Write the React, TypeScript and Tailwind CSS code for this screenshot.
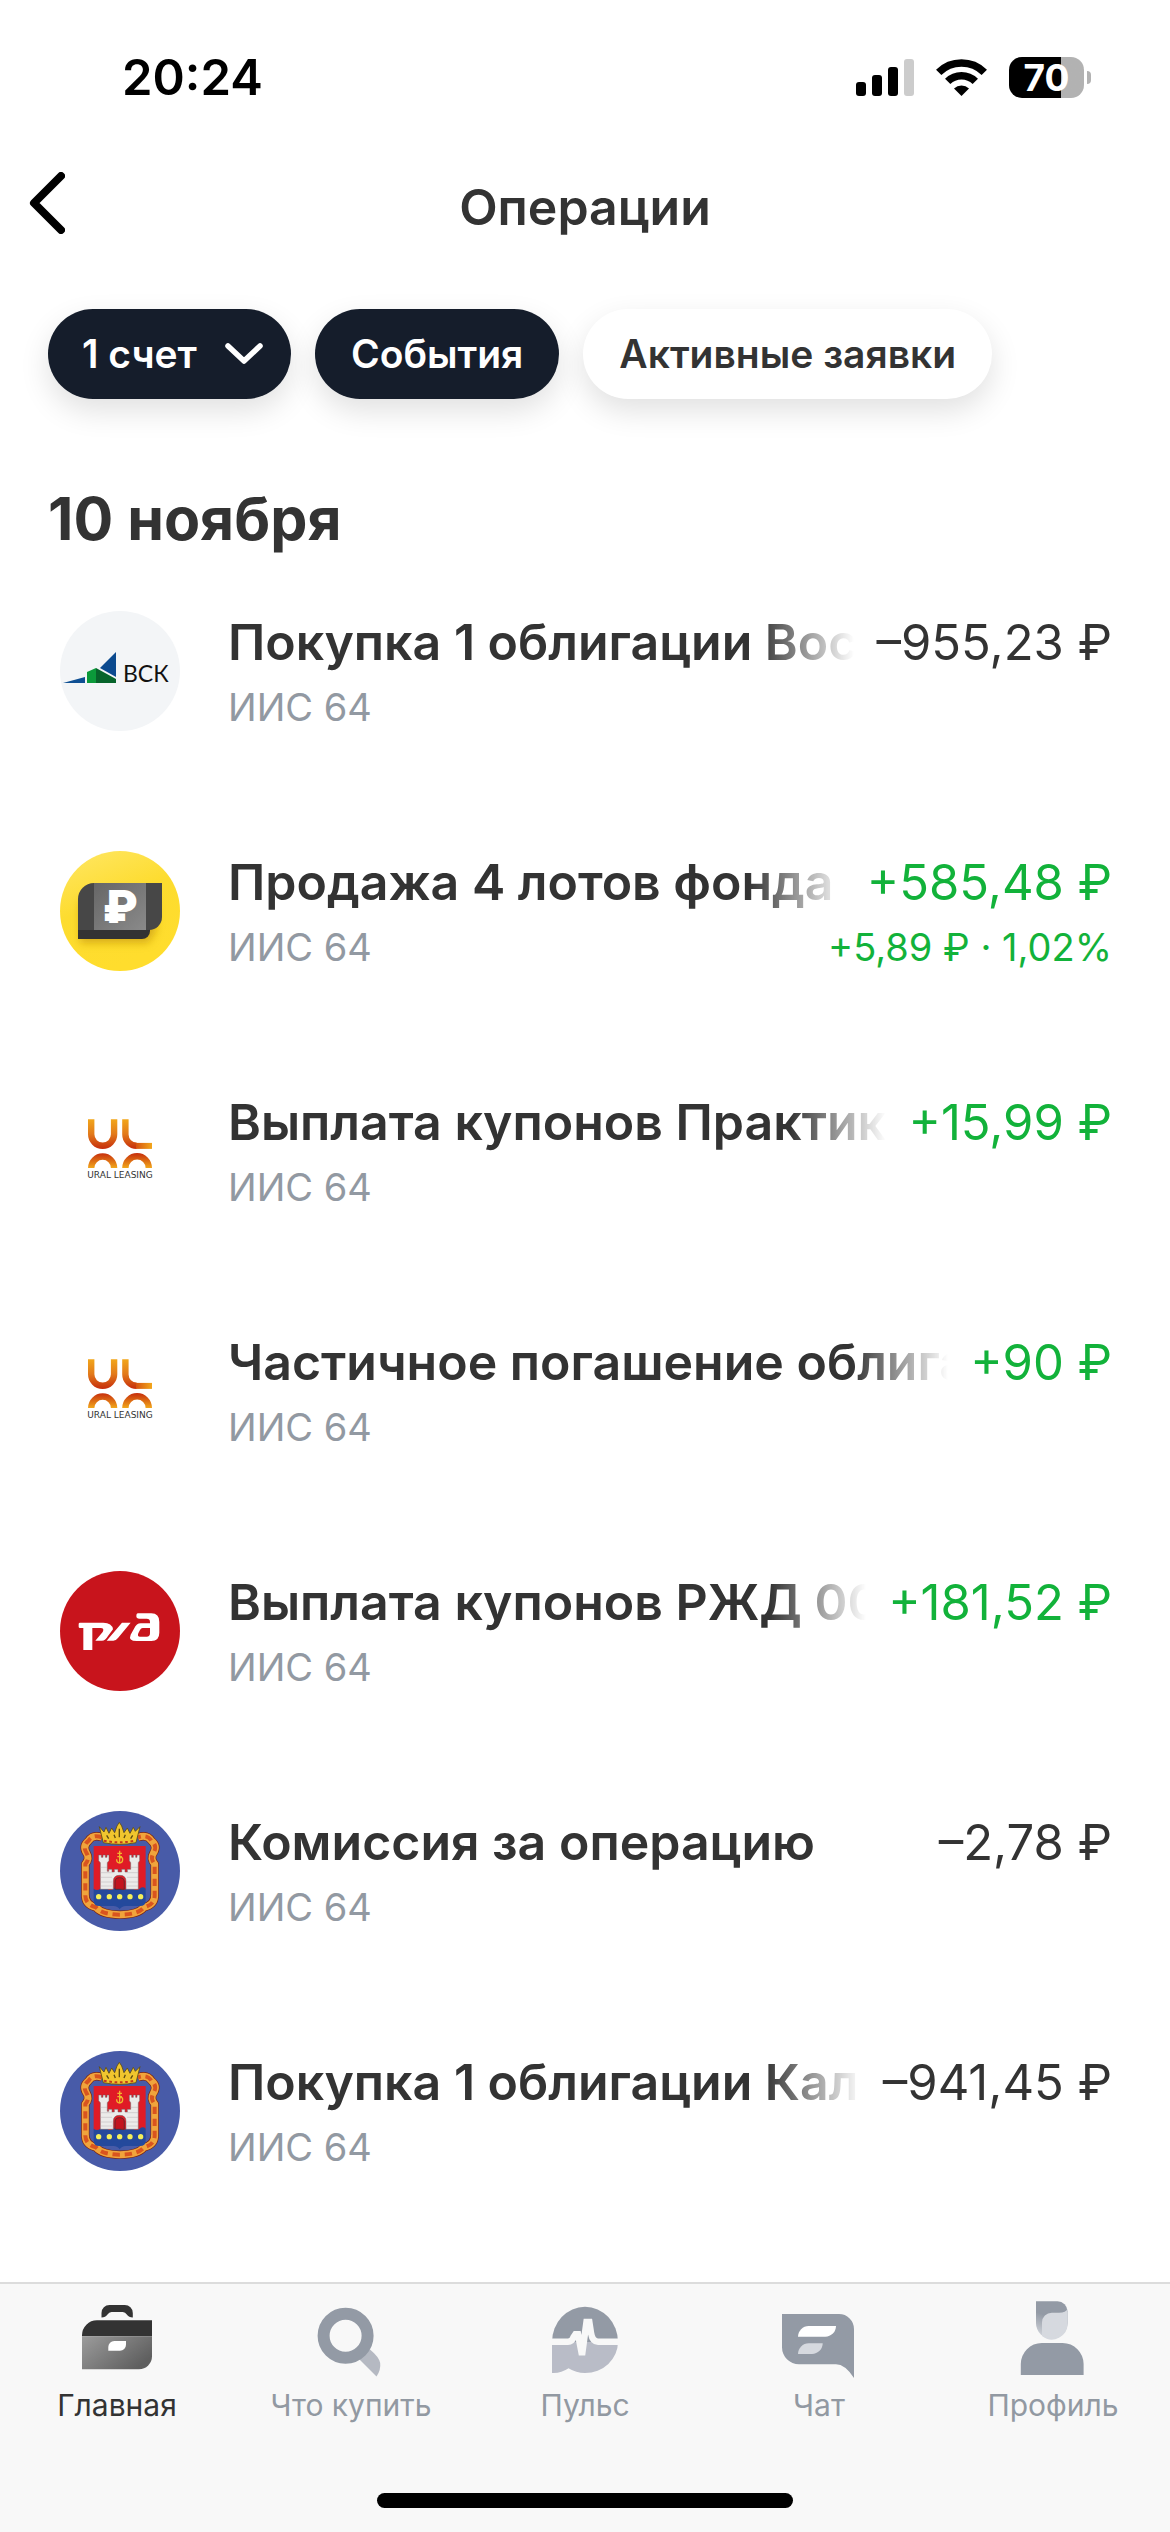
import type { ReactNode } from 'react'

type Operation = {
  id: number
  logo: ReactNode
  title: string
  account: string
  amount: string
  positive?: boolean
  profit?: string
}

function VskLogo() {
  return (
    <svg viewBox="0 0 120 120" className="size-[120px] shrink-0" aria-hidden="true">
      <circle cx="60" cy="60" r="60" fill="#f3f5f7" />
      <path d="M3 72 25 66v6z" fill="#0e4f93" />
      <path d="M56 41v25L40 57z" fill="#0b4a8f" />
      <path d="M27 72V61l9-4v15z" fill="#0b9a3a" />
      <path d="m36 57 20 11v4H36z" fill="#07642b" />
      <text x="63" y="71" fontSize="23" fontFamily="Lato, sans-serif" fill="#111">ВСК</text>
    </svg>
  )
}

function FundLogo() {
  return (
    <svg viewBox="0 0 120 120" className="size-[120px] shrink-0" aria-hidden="true">
      <defs>
        <linearGradient id="fund-bg" x1="0" y1="0" x2="0.4" y2="1">
          <stop offset="0" stopColor="#ffe766" />
          <stop offset="0.5" stopColor="#fddc2f" />
          <stop offset="1" stopColor="#ffdd2d" />
        </linearGradient>
        <linearGradient id="fund-note" x1="0" y1="0" x2="1" y2="1">
          <stop offset="0" stopColor="#666" />
          <stop offset="1" stopColor="#8a8a8a" />
        </linearGradient>
        <filter id="fund-shadow" x="-20%" y="-20%" width="140%" height="150%">
          <feGaussianBlur stdDeviation="4" />
        </filter>
      </defs>
      <circle cx="60" cy="60" r="60" fill="url(#fund-bg)" />
      <path d="M20 50h76v30l-8 12H20z" fill="#c79a10" opacity="0.7" filter="url(#fund-shadow)" />
      <path d="M18 76h72v4a8 8 0 0 1-8 8H18z" fill="#333" />
      <path d="M34 32h68v34a13 13 0 0 1-13 13H18V48a16 16 0 0 1 16-16z" fill="#474747" />
      <path d="M34 32h52v47H34z" fill="url(#fund-note)" />
      <text x="60" y="72" textAnchor="middle" fontSize="45" fontWeight="900" fontFamily="Inter, sans-serif" fill="#fff">₽</text>
    </svg>
  )
}

function UralLogo() {
  return (
    <svg viewBox="0 0 120 120" className="size-[120px] shrink-0" aria-hidden="true">
      <defs>
        <linearGradient id="ural-down" gradientUnits="userSpaceOnUse" x1="0" y1="28" x2="0" y2="58">
          <stop offset="0" stopColor="#f2a71b" />
          <stop offset="0.5" stopColor="#e27a1a" />
          <stop offset="1" stopColor="#c62d0c" />
        </linearGradient>
        <linearGradient id="ural-up" gradientUnits="userSpaceOnUse" x1="0" y1="62" x2="0" y2="77">
          <stop offset="0" stopColor="#c62d0c" />
          <stop offset="1" stopColor="#f2a71b" />
        </linearGradient>
        <linearGradient id="ural-side" gradientUnits="userSpaceOnUse" x1="72" y1="0" x2="92" y2="0">
          <stop offset="0" stopColor="#cf3f0e" />
          <stop offset="1" stopColor="#f2a71b" />
        </linearGradient>
      </defs>
      <g fill="none" strokeWidth="6.4">
        <path d="M31.2 28.3v15a11.4 11.4 0 0 0 22.9 0v-15" stroke="url(#ural-down)" />
        <path d="M65.4 28.3v15.2a11.2 11.2 0 0 0 11.2 11.2" stroke="url(#ural-down)" />
        <path d="M76 54.9h16" stroke="url(#ural-side)" strokeWidth="6" />
        <path d="M31.2 77a11.4 11.4 0 0 1 22.9 0" stroke="url(#ural-up)" />
        <path d="M65.4 77a11.7 11.7 0 0 1 23.4 0" stroke="url(#ural-up)" />
      </g>
      <text x="60" y="87" textAnchor="middle" fontSize="9" fontFamily="'DejaVu Sans', sans-serif" fill="#333">URAL LEASING</text>
    </svg>
  )
}

function RzdLogo() {
  return (
    <svg viewBox="0 0 120 120" className="size-[120px] shrink-0" aria-hidden="true">
      <circle cx="60" cy="60" r="60" fill="#c8141c" />
      <g transform="translate(-20 -31) scale(.3333)" fill="#fff">
        <path d="M120 248H190Q216 248 219 268L204 288Q196 302 186 302H166L188 276Q194 264 182 264H157V330H130V264H120Q116 264 116 260V252Q116 248 120 248Z" />
        <path d="M200 302 246 248H272L234 294Q228 302 220 302Z" />
        <path
          fillRule="evenodd"
          d="M293 220H334Q358 220 358 246V278Q358 303 334 303H290Q264 303 272 284L282 266Q290 250 302 250H330V246Q330 236 320 236H298Q289 236 289 228Q289 220 293 220ZM308 264Q303 264 300 270L295 280Q291 290 300 290H320Q330 290 330 280V264Z"
        />
      </g>
    </svg>
  )
}

const RIBBON =
  'M186 142Q158 132 146 152Q126 168 140 190Q150 206 136 222V312Q134 344 168 352Q186 374 240 374Q294 374 312 352Q346 344 344 312V222Q330 206 340 190Q354 168 334 152Q322 132 294 142'

function KaliningradLogo() {
  return (
    <svg viewBox="0 0 120 120" className="size-[120px] shrink-0" aria-hidden="true">
      <circle cx="60" cy="60" r="60" fill="#485ba8" />
      <g transform="translate(-20 -21) scale(.3333)">
        {/* Ribbon */}
        <g fill="none" strokeLinejoin="round">
          <path d={RIBBON} stroke="#7d2410" strokeWidth="25" />
          <path d={RIBBON} stroke="#f0a43c" strokeWidth="21" />
          <path d={RIBBON} stroke="#d9541f" strokeWidth="12" strokeDasharray="22 14" />
        </g>
        {/* Shield */}
        <path d="M161 168H317V300H161Z" fill="#e01b26" />
        <path d="M161 296Q171 304 181 296T201 296T221 296T240 296T259 296T279 296T299 296T317 296V334Q317 348 300 348H258Q244 349 239 358Q234 349 220 348H178Q161 348 161 334Z" fill="#24499c" />
        <g fill="#f4ef5a">
          <circle cx="176" cy="320" r="8" />
          <circle cx="208" cy="320" r="8" />
          <circle cx="239" cy="320" r="8" />
          <circle cx="270" cy="320" r="8" />
          <circle cx="302" cy="320" r="8" />
        </g>
        {/* Castle */}
        <path
          d="M176 195H184V202H189V195H196V202H201V195H207V212L202 218V244H206V238H216V246H223V238H234V246H245V238H255V246H262V238H272V218L268 212V195H275V202H280V195H287V202H291V195H299V212L295 218V298H258V274Q258 256 239 256Q220 256 220 274V298H181V218L176 212Z"
          fill="#ecebea"
          stroke="#6b5b60"
          strokeWidth="1.5"
        />
        <g stroke="#b9b3b6" strokeWidth="1.5">
          <path d="M182 232H201M182 248H218M182 262H216M182 276H216M182 288H216M272 232H294M260 248H294M261 262H294M261 276H294M261 288H294" />
        </g>
        <path d="M225 298V276Q225 263 239 263Q253 263 253 276V298Z" fill="#c3141f" stroke="#333" strokeWidth="2" />
        {/* Monogram */}
        <path d="M239 182V218M232 190H246M232 200H246M230 208Q230 219 239 219Q248 219 248 208Q248 200 239 204" fill="none" stroke="#f0b52c" strokeWidth="4" />
        {/* Crown */}
        <path
          d="M190 158 178 110 192 126 198 112 207 130 215 114 224 128 231 108 238 97 245 108 252 128 262 114 270 130 280 112 286 124 300 110 288 158Q239 168 190 158Z"
          fill="#f0c52e"
          stroke="#5d4a12"
          strokeWidth="2.5"
        />
        <path d="M200 136 206 146M222 134 226 144M256 134 252 144M278 136 272 146M238 116V142" stroke="#5d4a12" strokeWidth="4" />
        <path d="M192 152Q239 162 286 152" fill="none" stroke="#c23b17" strokeWidth="6" strokeDasharray="8 8" />
      </g>
    </svg>
  )
}

const OPERATIONS: Operation[] = [
  { id: 1, logo: <VskLogo />, title: 'Покупка 1 облигации Вос', account: 'ИИС 64', amount: '–955,23 ₽' },
  { id: 2, logo: <FundLogo />, title: 'Продажа 4 лотов фонда Д', account: 'ИИС 64', amount: '+585,48 ₽', positive: true, profit: '+5,89 ₽ · 1,02%' },
  { id: 3, logo: <UralLogo />, title: 'Выплата купонов Практик', account: 'ИИС 64', amount: '+15,99 ₽', positive: true },
  { id: 4, logo: <UralLogo />, title: 'Частичное погашение облига', account: 'ИИС 64', amount: '+90 ₽', positive: true },
  { id: 5, logo: <RzdLogo />, title: 'Выплата купонов РЖД 00', account: 'ИИС 64', amount: '+181,52 ₽', positive: true },
  { id: 6, logo: <KaliningradLogo />, title: 'Комиссия за операцию', account: 'ИИС 64', amount: '–2,78 ₽' },
  { id: 7, logo: <KaliningradLogo />, title: 'Покупка 1 облигации Кал', account: 'ИИС 64', amount: '–941,45 ₽' },
]

const TABS = [
  {
    label: 'Главная',
    active: true,
    icon: (
      <>
        <defs>
          <linearGradient id="bag" x1="0" y1="0" x2="1" y2="0.6">
            <stop offset="0" stopColor="#9c9c9c" />
            <stop offset="1" stopColor="#5f5f5f" />
          </linearGradient>
        </defs>
        <path d="M26.5 20.5V16a8 8 0 0 1 8-8h15.3a8 8 0 0 1 8 8v4.5q-4 0-6-3-1.5-2.5-4-2.5H36.5q-2.5 0-4 2.5-2 3-6 3z" fill="#333" />
        <path d="M7 39.3v-1a15 15 0 0 1 15-15h55v16z" fill="#333" />
        <path d="M7 39.3h70v20a13 13 0 0 1-13 13H7z" fill="url(#bag)" />
        <path d="M33.3 53.7V50a6 6 0 0 1 6-6H51v3.7a6 6 0 0 1-6 6z" fill="#fff" />
      </>
    ),
  },
  {
    label: 'Что купить',
    icon: (
      <>
        <path d="M50 62 67.5 79.5Q72 73 71.2 66 70 60 61 52.5z" fill="#b5b9c2" />
        <circle cx="36.6" cy="38.7" r="22" fill="none" stroke="#939aa5" strokeWidth="12" />
      </>
    ),
  },
  {
    label: 'Пульс',
    icon: (
      <>
        <path d="M9 45a33 35.3 0 0 1 66 0z" fill="#939aa5" />
        <path d="M9 45h66a33 31 0 0 1-33 31q-9 0-16.5-4.7Q18 76.5 9 76z" fill="#b9bcc7" />
        <path d="M8 44.7h17q4 0 5.5-4.5l2-3h2.5L39 58l4.5-33h2.8l1.7 11q1.5 8.7 7 8.7h21" fill="none" stroke="#f8f8f8" strokeWidth="6.5" />
      </>
    ),
  },
  {
    label: 'Чат',
    icon: (
      <>
        <path d="M5 17h57a15 15 0 0 1 15 15v49Q68 67.3 59 67.3H22a17 17 0 0 1-17-17z" fill="#939aa5" />
        <path d="M21 39.7a10.7 10.7 0 0 1 10.7-10.7H59a10.7 10.7 0 0 1-10.7 10.7z" fill="#fff" />
        <path d="M21 57a10.7 10.7 0 0 1 10.7-10.7h14A10.7 10.7 0 0 1 35 57z" fill="#d6d9df" />
      </>
    ),
  },
  {
    label: 'Профиль',
    icon: (
      <>
        <defs>
          <linearGradient id="hair" x1="0.5" y1="0" x2="0.2" y2="1">
            <stop offset="0" stopColor="#939aa5" />
            <stop offset="0.4" stopColor="#939aa5" />
            <stop offset="1" stopColor="#d6d9df" />
          </linearGradient>
        </defs>
        <path d="M25 4.3h21.5a10 10 0 0 1 10 10V26a15.7 15.7 0 0 1-31.5 0z" fill="url(#hair)" />
        <path d="M31 39V25.5a9.8 9.8 0 0 1 9.8-9.8H48q7 0 8.5-4V26A15.7 15.7 0 0 1 31 39z" fill="#d6d9df" />
        <path d="M9.8 78V67a21 21 0 0 1 21-21h20.8a21 21 0 0 1 21 21v11z" fill="#939aa5" />
      </>
    ),
  },
]

function StatusBar() {
  return (
    <div className="flex h-[141px] items-center justify-between pt-[14px] pr-[79px] pl-[122px]">
      <span className="text-[49px] leading-none font-semibold text-black">20:24</span>
      <div className="flex items-center gap-[22px]">
        <svg viewBox="0 0 58 37" className="h-[37px] w-[58px]" aria-hidden="true">
          <rect x="0" y="23" width="10" height="14" rx="3" />
          <rect x="16" y="16" width="10" height="21" rx="3" />
          <rect x="32" y="8" width="10" height="29" rx="3" />
          <rect x="48" y="0" width="10" height="37" rx="3" fill="#ccc" />
        </svg>
        <svg viewBox="0 0 51 37" className="h-[37px] w-[51px]" aria-hidden="true">
          <g fill="none" stroke="#000" strokeWidth="7.6">
            <path d="M2.7 13.4a32.5 32.5 0 0 1 45.6 0" />
            <path d="M11.7 22.4a19.7 19.7 0 0 1 27.6 0" />
          </g>
          <path d="M25.5 37 18 29.5a10.8 10.8 0 0 1 15 0z" />
        </svg>
        <div className="flex items-center gap-[3px]">
          <span className="flex h-[41px] w-[75px] items-center justify-center rounded-[13px] bg-linear-to-r from-black from-70% to-[#b2b2b2] to-70% text-[37px] leading-none font-bold text-white">
            70
          </span>
          <span className="h-[13px] w-1 rounded-r-full bg-[#b2b2b2]" />
        </div>
      </div>
    </div>
  )
}

function OperationRow({ op }: { op: Operation }) {
  return (
    <li className="flex h-[240px] items-start gap-12 py-[60px] pr-[58px] pl-[60px]">
      {op.logo}
      <div className="flex min-w-0 flex-1 flex-col gap-[10px]">
        <div className="flex h-[62px] items-baseline gap-[22px] leading-[62px]">
          <span className="min-w-0 flex-1 overflow-hidden text-[50px] font-semibold whitespace-nowrap mask-r-from-[calc(100%-96px)] mask-r-to-100%">
            {op.title}
          </span>
          <span className={`shrink-0 text-[49px] ${op.positive ? 'text-[#12b23a]' : 'text-[#333]'}`}>{op.amount}</span>
        </div>
        <div className="flex justify-between text-[38px] leading-[48px]">
          <span className="text-[#9299a2]">{op.account}</span>
          {op.profit && <span className="text-[#12b23a]">{op.profit}</span>}
        </div>
      </div>
    </li>
  )
}

export default function App() {
  return (
    <div className="flex min-h-screen flex-col bg-white font-[Inter,sans-serif] text-[#333]">
      <StatusBar />

      <header className="grid h-[132px] grid-cols-[120px_1fr_120px] items-center">
        <button type="button" aria-label="Назад" className="flex h-full items-center pb-2 pl-[29px]">
          <svg viewBox="0 0 36 62" className="h-[62px] w-[36px]" aria-hidden="true">
            <path d="M32 4 5 31l27 27" fill="none" stroke="#000" strokeWidth="8" strokeLinecap="round" strokeLinejoin="round" />
          </svg>
        </button>
        <h1 className="text-center text-[50px] font-semibold">Операции</h1>
      </header>

      {/* Filters */}
      <div className="flex gap-6 px-12 pt-9 text-[39px] font-semibold">
        <button type="button" className="flex h-[90px] items-center gap-7 rounded-full bg-[#151d2b] pr-7 pl-[34px] text-white shadow-[0_12px_30px_rgba(0,0,0,0.12)]">
          1 счет
          <svg viewBox="0 0 38 22" className="h-[22px] w-[38px]" aria-hidden="true">
            <path d="m3 3 16 15L35 3" fill="none" stroke="#fff" strokeWidth="5.5" strokeLinecap="round" strokeLinejoin="round" />
          </svg>
        </button>
        <button type="button" className="h-[90px] rounded-full bg-[#151d2b] px-9 text-white shadow-[0_12px_30px_rgba(0,0,0,0.12)]">
          События
        </button>
        <button type="button" className="h-[90px] rounded-full bg-white px-9 shadow-[0_12px_30px_rgba(0,0,0,0.12)]">
          Активные заявки
        </button>
      </div>

      <main className="pt-[88px]">
        <h2 className="px-12 text-[59px] leading-[64px] font-bold">10 ноября</h2>
        <ul>
          {OPERATIONS.map((op) => (
            <OperationRow key={op.id} op={op} />
          ))}
        </ul>
      </main>

      <nav className="mt-auto border-t-2 border-[#dcdcdc] bg-[#f8f8f8] pt-[13px]">
        <div className="grid grid-cols-5">
          {TABS.map((tab) => (
            <a
              key={tab.label}
              href="#"
              aria-current={tab.active ? 'page' : undefined}
              className={`flex flex-col items-center gap-1 text-[30px] leading-[40px] ${tab.active ? 'text-[#333]' : 'text-[#9299a2]'}`}
            >
              <svg viewBox="0 0 84 84" className="size-[84px]" aria-hidden="true">
                {tab.icon}
              </svg>
              {tab.label}
            </a>
          ))}
        </div>
        <div className="mx-auto mt-[68px] mb-6 h-[15px] w-[416px] rounded-full bg-black" />
      </nav>
    </div>
  )
}
